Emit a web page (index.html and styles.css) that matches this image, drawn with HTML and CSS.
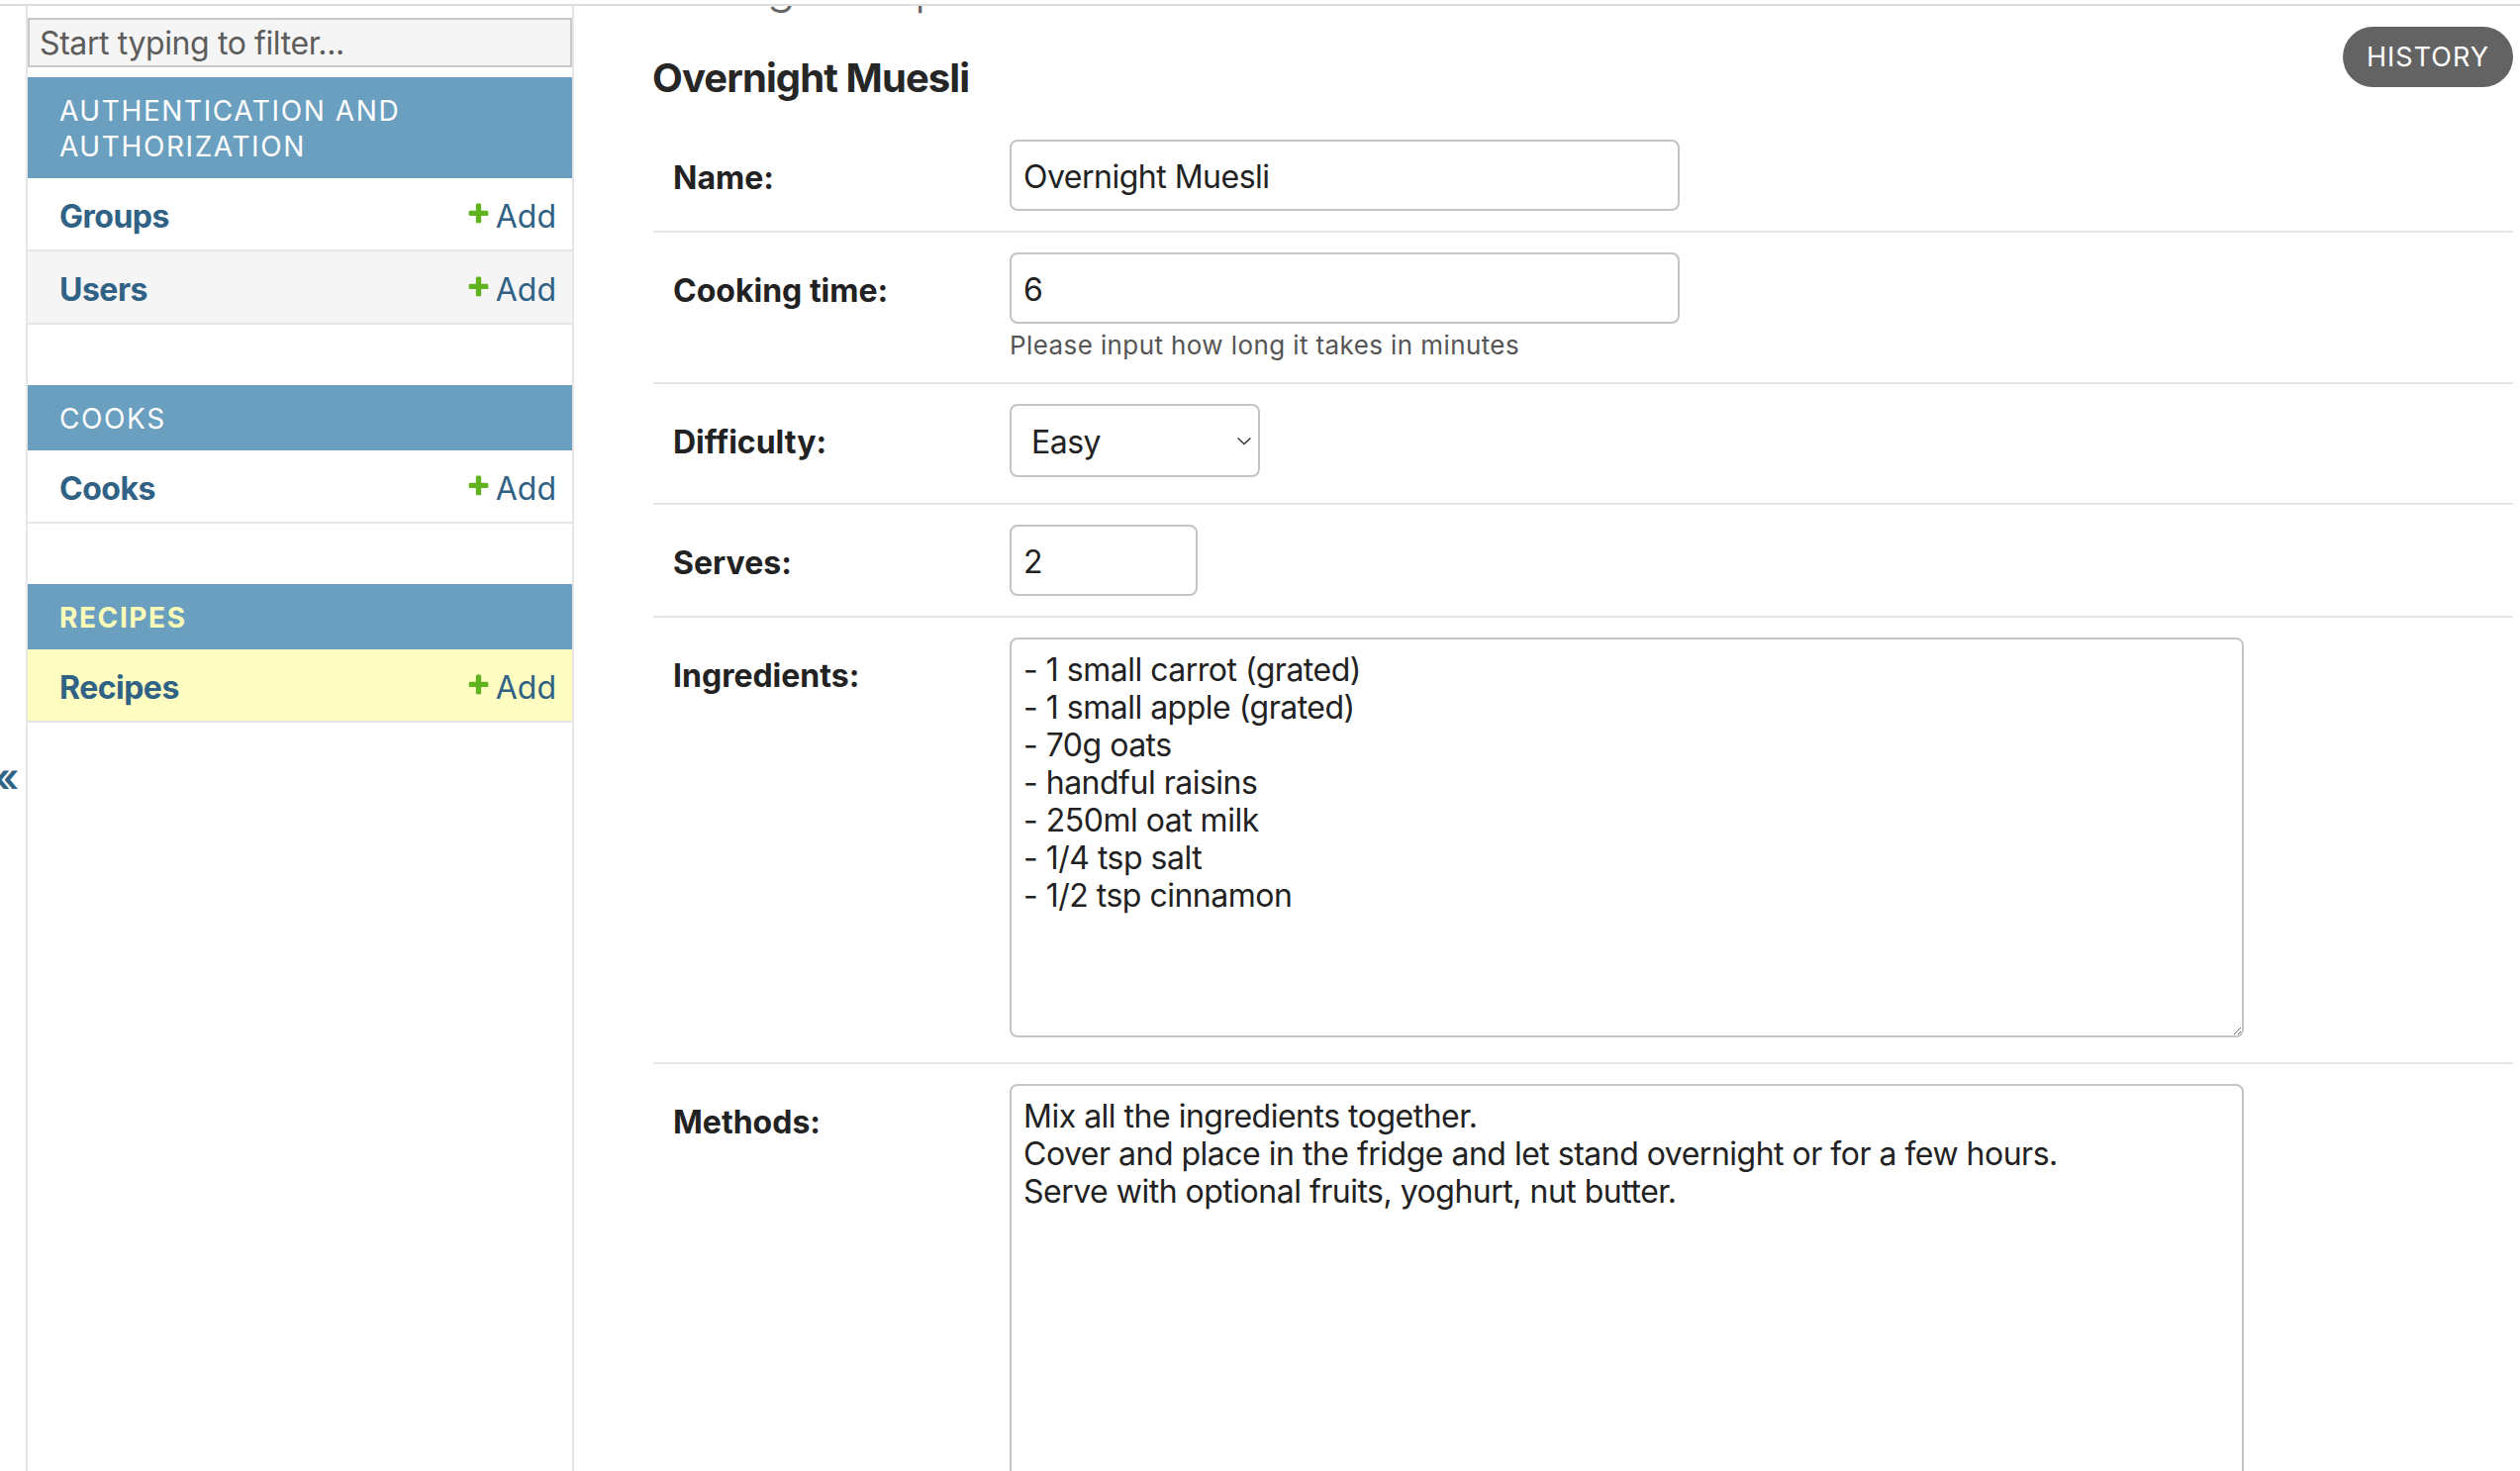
FILE: index.html
```html
<!DOCTYPE html>
<html lang="en">
<head>
<meta charset="utf-8">
<title>Change recipe | Django site admin</title>
<link rel="stylesheet" href="styles.css">
</head>
<body>
<div class="frame">
  <div class="main">
    <button class="toggle-nav" type="button" aria-label="Toggle navigation"><span class="toggle-glyph">«</span></button>
    <nav class="sidebar">
      <input class="nav-filter" type="search" placeholder="Start typing to filter...">
      <div class="module">
        <div class="caption">Authentication and Authorization</div>
        <div class="model-row">
          <a class="model" href="#">Groups</a>
          <a class="addlink" href="#"><svg class="plus" viewBox="0 0 1792 1792" width="25" height="25"><path d="M1600 796v192q0 40-28 68t-68 28h-416v416q0 40-28 68t-68 28h-192q-40 0-68-28t-28-68v-416h-416q-40 0-68-28t-28-68v-192q0-40 28-68t68-28h416v-416q0-40 28-68t68-28h192q40 0 68 28t28 68v416h416q40 0 68 28t28 68z"/></svg>Add</a>
        </div>
        <div class="model-row alt">
          <a class="model" href="#">Users</a>
          <a class="addlink" href="#"><svg class="plus" viewBox="0 0 1792 1792" width="25" height="25"><path d="M1600 796v192q0 40-28 68t-68 28h-416v416q0 40-28 68t-68 28h-192q-40 0-68-28t-28-68v-416h-416q-40 0-68-28t-28-68v-192q0-40 28-68t68-28h416v-416q0-40 28-68t68-28h192q40 0 68 28t28 68v416h416q40 0 68 28t28 68z"/></svg>Add</a>
        </div>
      </div>
      <div class="module">
        <div class="caption">Cooks</div>
        <div class="model-row">
          <a class="model" href="#">Cooks</a>
          <a class="addlink" href="#"><svg class="plus" viewBox="0 0 1792 1792" width="25" height="25"><path d="M1600 796v192q0 40-28 68t-68 28h-416v416q0 40-28 68t-68 28h-192q-40 0-68-28t-28-68v-416h-416q-40 0-68-28t-28-68v-192q0-40 28-68t68-28h416v-416q0-40 28-68t68-28h192q40 0 68 28t28 68v416h416q40 0 68 28t28 68z"/></svg>Add</a>
        </div>
      </div>
      <div class="module">
        <div class="caption current-app">Recipes</div>
        <div class="model-row current-model">
          <a class="model" href="#">Recipes</a>
          <a class="addlink" href="#"><svg class="plus" viewBox="0 0 1792 1792" width="25" height="25"><path d="M1600 796v192q0 40-28 68t-68 28h-416v416q0 40-28 68t-68 28h-192q-40 0-68-28t-28-68v-416h-416q-40 0-68-28t-28-68v-192q0-40 28-68t68-28h416v-416q0-40 28-68t68-28h192q40 0 68 28t28 68v416h416q40 0 68 28t28 68z"/></svg>Add</a>
        </div>
      </div>
    </nav>
    <div class="content">
      <h1 class="page-title">Change recipe</h1>
      <div class="title-row">
        <h2 class="object-name">Overnight Muesli</h2>
        <ul class="object-tools"><li><a class="historylink" href="#">History</a></li></ul>
      </div>
      <form class="change-form">
        <div class="form-row">
          <label for="id_name">Name:</label>
          <div class="field"><input class="vTextField" id="id_name" type="text" value="Overnight Muesli"></div>
        </div>
        <div class="form-row">
          <label for="id_cooking_time">Cooking time:</label>
          <div class="field">
            <input class="vTextField" id="id_cooking_time" type="number" value="6">
            <div class="help">Please input how long it takes in minutes</div>
          </div>
        </div>
        <div class="form-row">
          <label for="id_difficulty">Difficulty:</label>
          <div class="field">
            <div class="select-wrap">
              <select id="id_difficulty">
                <option selected>Easy</option>
                <option>Medium</option>
                <option>Intermediate</option>
                <option>Hard</option>
              </select>
              <svg class="chevron" width="16" height="9" viewBox="0 0 16 9"><path d="M1.5 1.5 L8 7.5 L14.5 1.5" fill="none" stroke="#3a3a3a" stroke-width="1.5"/></svg>
            </div>
          </div>
        </div>
        <div class="form-row">
          <label for="id_serves">Serves:</label>
          <div class="field"><input class="vSmallField" id="id_serves" type="number" value="2"></div>
        </div>
        <div class="form-row">
          <label for="id_ingredients">Ingredients:</label>
          <div class="field"><textarea class="vLargeTextField" id="id_ingredients">- 1 small carrot (grated)
- 1 small apple (grated)
- 70g oats
- handful raisins
- 250ml oat milk
- 1/4 tsp salt
- 1/2 tsp cinnamon</textarea></div>
        </div>
        <div class="form-row">
          <label for="id_methods">Methods:</label>
          <div class="field"><textarea class="vLargeTextField" id="id_methods">Mix all the ingredients together.
Cover and place in the fridge and let stand overnight or for a few hours.
Serve with optional fruits, yoghurt, nut butter.</textarea></div>
        </div>
      </form>
    </div>
  </div>
</div>
</body>
</html>
```

FILE: styles.css
```css
* { box-sizing: border-box; }
html, body { margin: 0; padding: 0; background: #fff; }
body {
  font-family: Inter, "Noto Sans", "Liberation Sans", sans-serif;
  color: #333;
  overflow: hidden;
}
.frame {
  margin-top: 4px;
  border-top: 2px solid #dedede;
  height: calc(100vh - 4px);
  overflow: hidden;
}
.main { display: flex; height: 100%; }

/* toggle */
.toggle-nav {
  flex: 0 0 28px;
  width: 28px;
  border: 0;
  border-right: 2px solid #e6e6e6;
  background: #fff;
  padding: 0;
  margin: 0;
  display: flex;
  align-items: flex-start;
  justify-content: flex-start;
  color: #306385;
  font-family: inherit;
  font-size: 40px;
  line-height: 40px;
  font-weight: 600;
  overflow: hidden;
}
.toggle-glyph { margin-top: 760px; margin-left: -6px; }

/* sidebar */
.sidebar {
  flex: 0 0 552px;
  width: 552px;
  border-right: 2px solid #e6e6e6;
  padding-top: 12px;
  overflow: hidden;
}
.nav-filter {
  display: block;
  width: 100%;
  height: 50px;
  margin: 0 0 10px 0;
  padding: 0 10px;
  border: 2px solid #c8c8c8;
  background: #f5f5f5;
  font-family: inherit;
  font-size: 32px;
  letter-spacing: -0.4px;
  color: #333;
  outline: none;
  -webkit-appearance: none;
  appearance: none;
}
.nav-filter::placeholder { color: #5c5c5c; }
.module { margin-bottom: 61px; }
.caption {
  background: #6a9fbf;
  color: #fff;
  padding: 16px 32px 14px;
  font-size: 28px;
  line-height: 36px;
  letter-spacing: 1.6px;
  text-transform: uppercase;
  font-weight: 400;
}
.caption.current-app { color: #fbfbb8; font-weight: 700; }
.model-row {
  display: flex;
  justify-content: space-between;
  align-items: center;
  padding: 19px 16px 13px 32px;
  line-height: 40px;
  font-size: 32px;
  border-bottom: 2px solid #e6e6e6;
  background: #fff;
}
.model-row.alt { background: #f5f5f5; }
.model-row.current-model { background: #fdfdc2; }
.model { color: #2f6285; font-weight: 700; text-decoration: none; letter-spacing: -0.5px; }
.addlink {
  display: inline-flex;
  align-items: center;
  color: #2f6285;
  text-decoration: none;
}
.plus { fill: #60b31e; margin: 0 5px 7px 0; }

/* content */
.content {
  flex: 1;
  min-width: 0;
  padding: 0 7px 0 80px;
}
.page-title {
  margin: -44px 0 0 -1px;
  font-size: 48px;
  line-height: 48px;
  font-weight: 300;
  color: #666;
  letter-spacing: -0.5px;
}
.title-row {
  display: flex;
  justify-content: space-between;
  align-items: flex-start;
  margin-top: 17px;
}
.object-name {
  margin: 28px 0 0 -1px;
  font-size: 40px;
  line-height: 48px;
  font-weight: 700;
  color: #262626;
  letter-spacing: -0.9px;
}
.object-tools { list-style: none; margin: 0; padding: 0; }
.historylink {
  display: block;
  height: 61px;
  padding: 0 24px;
  line-height: 62px;
  border-radius: 31px;
  background: #636363;
  color: #fff;
  font-size: 27px;
  letter-spacing: 1px;
  text-transform: uppercase;
  text-decoration: none;
}

.change-form { margin-top: 18px; }
.form-row {
  display: flex;
  align-items: flex-start;
  padding: 20px;
  border-bottom: 2px solid #e6e6e6;
}
.form-row label {
  flex: 0 0 340px;
  padding: 23px 20px 0 0;
  font-size: 32px;
  line-height: 32px;
  font-weight: 700;
  color: #222;
}
.field { flex: 0 0 auto; }
input.vTextField, input.vSmallField, select, textarea {
  display: block;
  border: 2px solid #c4c4c4;
  border-radius: 8px;
  background: #fff;
  font-family: inherit;
  font-size: 32px;
  letter-spacing: -0.5px;
  color: #222;
  outline: none;
  margin: 0;
}
input.vTextField, input.vSmallField {
  height: 72px;
  padding: 2px 12px 0;
  -moz-appearance: textfield;
}
input::-webkit-outer-spin-button,
input::-webkit-inner-spin-button { -webkit-appearance: none; margin: 0; }
input.vTextField { width: 677px; }
input.vSmallField { width: 190px; }
.help {
  margin-top: 5px;
  font-size: 26px;
  line-height: 34px;
  letter-spacing: 0.4px;
  color: #555;
}
.select-wrap { position: relative; width: 253px; margin-bottom: 6px; }
select {
  width: 253px;
  height: 74px;
  padding: 2px 40px 0 20px;
  -webkit-appearance: none;
  appearance: none;
}
.chevron { position: absolute; right: 8px; top: 33px; pointer-events: none; }
textarea.vLargeTextField {
  width: 1247px;
  height: 404px;
  padding: 12px;
  line-height: 38px;
  margin-bottom: 5px;
  resize: both;
}
```
